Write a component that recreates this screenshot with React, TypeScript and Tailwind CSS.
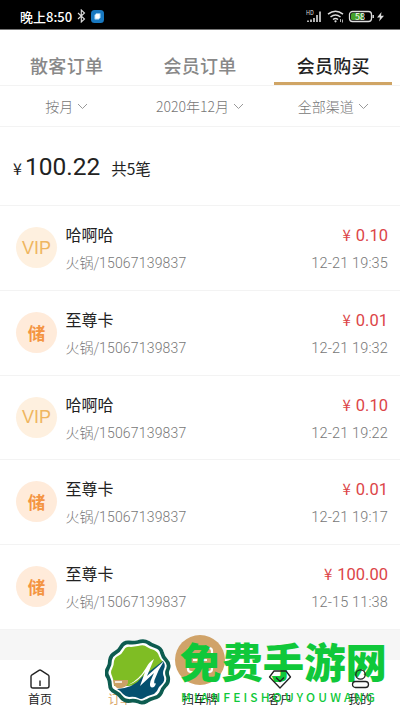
import React from "react";
import clsx from "clsx";

type Order = {
    kind: 'vip' | 'stored',
    name: string,
    detail: string,
    amount: string,
    time: string,
}

const orders: Order[] = [
    { kind: 'vip', name: '哈啊哈', detail: '15067139837', amount: '0.10', time: '12-21 19:35' },
    { kind: 'stored', name: '至尊卡', detail: '15067139837', amount: '0.01', time: '12-21 19:32' },
    { kind: 'vip', name: '哈啊哈', detail: '15067139837', amount: '0.10', time: '12-21 19:22' },
    { kind: 'stored', name: '至尊卡', detail: '15067139837', amount: '0.01', time: '12-21 19:17' },
    { kind: 'stored', name: '至尊卡', detail: '15067139837', amount: '100.00', time: '12-15 11:38' },
];

const tabs = ['散客订单', '会员订单', '会员购买'];
const filters = ['按月', '2020年12月', '全部渠道'];

const StatusBar = () => (
    <header className="flex h-[30px] items-center border-b border-[#777] bg-black pl-[20px] pr-[15px] pt-[3px] text-white">
        <span className="w-[52px] whitespace-nowrap text-[13px] font-medium leading-none">晚上8:50</span>
        <svg className="ml-[5px]" width="9" height="14" viewBox="0 0 9 14" fill="none" stroke="#ddd" strokeWidth="1.1">
            <path d="M1 4l6.5 6L4.3 13V1l3.2 3L1 10" />
        </svg>
        <svg className="ml-[5px]" width="13" height="13" viewBox="0 0 13 13">
            <rect width="13" height="13" rx="3.5" fill="#1878c0" />
            <path d="M5.2 3.6h4v3.9L7.8 9.2h-4V5.1z" fill="#fff" stroke="#7fc2f0" strokeWidth="0.8" />
        </svg>
        <div className="flex-grow"></div>
        <svg width="79" height="15" viewBox="0 0 79 15" fill="none">
            <text x="0" y="5.500" fontSize="5.500" fill="#ddd">HD</text>
            <path d="M2 13v-1.400M5 13v-2.600M8 13V9M11 13V6M14 13V2.500" stroke="#ddd" strokeWidth="1.600" />
            <g stroke="#ddd" strokeWidth="1.500">
                <path d="M22 5.200q7.500-6 15 0M24.500 8q5-4 10 0M27 10.500q2.500-2 5 0" />
                <path d="M34.500 10v3M36.500 10.500v3" strokeWidth="0.8" />
            </g>
            <circle cx="29.500" cy="12.300" r="1.100" fill="#ddd" />
            <rect x="43.500" y="2.500" width="22" height="10" rx="3" stroke="#ddd" strokeWidth="1.300" />
            <rect x="45" y="4" width="12" height="7" rx="1.500" fill="#45a02c" />
            <path d="M67.200 6v3" stroke="#ddd" strokeWidth="1.500" />
            <text x="49" y="10.800" fontSize="9" fill="#fff">58</text>
            <path d="M75.500 3l-4.500 5.500h3l-1 4 5-5.800h-3z" fill="#ddd" />
        </svg>
    </header>
)

const Chevron = () => (
    <svg width="11" height="7" viewBox="0 0 11 7" fill="none" stroke="#999">
        <path d="M1 1l4.500 4.500L10 1" />
    </svg>
)

const OrderRow = ({ order }: { order: Order }) => (
    <li className="flex h-[84.8px] border-b border-[#f3f3f3] pl-[16px] pr-[12px] pt-[21px]">
        {order.kind == 'vip' ?
            <div className="flex h-[41px] w-[41px] items-center justify-center rounded-full bg-[#fef0df] pt-px font-['Liberation_Sans',sans-serif] text-[18px] text-[#efb65f]">VIP</div>
            :
            <div className="flex h-[41px] w-[41px] items-center justify-center rounded-full bg-[#ffebda] pt-px text-[17.500px] font-bold text-[#f49542]">储</div>}
        <div className="ml-[8.500px] flex-grow">
            <h2 className="-mt-[4px] text-[16px] leading-[22px] text-[#222]">{order.name}</h2>
            <p className="mt-[7px] flex text-[14px] font-light leading-[20px] text-[#777]">
                火锅/<span className="pt-px font-['Roboto',sans-serif] tracking-[0.180px]">{order.detail}</span>
            </p>
        </div>
        <div className="text-right">
            <p className="-mt-[4px] text-[16.500px] leading-[22px] text-[#dc4548]">
                <span className="mr-[5px] text-[15px]">¥</span>
                <span className="font-['Roboto',sans-serif]">{order.amount}</span>
            </p>
            <p className="mt-[7px] font-['Roboto',sans-serif] text-[14.500px] font-light leading-[20px] tracking-[0.150px] text-[#777]">{order.time}</p>
        </div>
    </li>
)

type NavItemProps = {
    label: string,
    active?: boolean,
    children?: React.ReactNode,
}

const NavItem = ({ label, active, children }: NavItemProps) => (
    <div className={clsx("flex w-1/5 flex-col items-center pt-[8px] text-[12px]", active ? "text-[#d9a566]" : "text-[#222]")}>
        <div className={clsx("h-[22px]", !active && "relative z-10")}>{children}</div>
        <span className="leading-[18px]">{label}</span>
    </div>
)

const BottomNav = () => (
    <nav className="relative flex h-[51px] bg-white">
        <NavItem label="首页">
            <svg width="22" height="22" viewBox="0 0 22 22" fill="none" stroke="#222" strokeWidth="1.400" strokeLinejoin="round">
                <path d="M2 8.500Q2 7.500 3 6.800L10 2.300Q11 1.700 12 2.300L19 6.800Q20 7.500 20 8.500V18Q20 20 18 20H4Q2 20 2 18zM11 12.500v5.500" />
            </svg>
        </NavItem>
        <NavItem label="订单" active>
            <svg width="26" height="22" viewBox="0 0 26 22">
                <rect x="3" y="1" width="20" height="19" rx="3" fill="#d0a36b" />
            </svg>
        </NavItem>
        <NavItem label="扫车牌" />
        <NavItem label="客户">
            <svg width="24" height="22" viewBox="0 0 24 22" fill="none" stroke="#222" strokeWidth="1.300" strokeLinejoin="round">
                <path d="M6 3h12l4.500 6L12 20 1.500 9zM8 9.500l4 4 4-4" />
            </svg>
        </NavItem>
        <NavItem label="我的">
            <svg width="20" height="22" viewBox="0 0 20 22" fill="none" stroke="#222" strokeWidth="1.300">
                <circle cx="10.500" cy="6.500" r="4.700" />
                <rect x="2.500" y="13.500" width="16" height="6" rx="3" />
            </svg>
        </NavItem>
        <div className="absolute -top-[25px] left-[175px] flex h-[50px] w-[50px] items-center justify-center rounded-full bg-[#d0a369]">
            <svg width="28" height="28" viewBox="0 0 28 28" fill="none" stroke="#fff" strokeWidth="2.200">
                <path d="M2 9V5Q2 2 5 2h5M18 2h5q3 0 3 3v4M2 19v4q0 3 3 3h5M18 26h5q3 0 3-3v-4M7 14h14" />
            </svg>
        </div>
    </nav>
)

// site badge and name laid over the bottom bar
const Watermark = () => (
    <div className="pointer-events-none absolute left-[105px] top-[639px] flex">
        <svg width="67" height="66" viewBox="0 0 67 66">
            <path
                d="M33 3Q39 1 43 3.500Q46 6 51 7.500Q56 9 57 14Q58 18 61 21Q65 25 63 30Q61 34 63 38Q64 44 60 47Q57 50 56 54Q54 58 49 59Q45 60 42 62Q37 65 33 62.500Q29 61 24 62Q19 62 16 58Q14 55 10 53Q5 51 5 46Q5 42 3 38Q0 34 3 29Q5 26 5 21Q6 16 10 14Q14 12 16 8Q19 3 24 3.500Q29 4 33 3z"
                fill="#fff" stroke="#0d5c50" strokeWidth="3.800"
            />
            <path d="M33 7Q39 5 42 8Q45 10 49 11Q53 13 54 17Q55 20 58 23L38 38Q32 47 23 47L9 47Q9 41 7 37Q5 33 7 30Q9 26 9 22Q10 18 13 17Q17 15 19 11Q21 7 26 8z" fill="#7fbd24" />
            <path d="M8 41H23V44Q21 50 12 49L9 46z" fill="#cba066" />
            <path d="M10 43h7" stroke="#fff" strokeWidth="1.500" />
            <path d="M12 50Q29 49 37 38L58 22Q61 26 59 30Q57 34 59 38Q60 42 57 45Q53 48 52 52Q50 55 46 56Q42 57 39 59Q36 61 33 59Q29 57 24 58Q21 58 18 55Q16 52 12 50z" fill="#05506f" />
            <path d="M23 46Q34 41 41 29Q44 23 49 20L42 37L59 22Q53 31 49.500 41Q48.500 46 51 44Q50 48.500 47 48.500Q44 48 45.500 42L49 34L35 47L40 33Q33 43 23 46z" fill="#fff" />
        </svg>
        <div className="ml-[8px] whitespace-nowrap text-[#10c83a]">
            <p className="-mt-[3px] h-[52px] text-[41.400px] font-black leading-[49px]">免费手游网</p>
            <p className="ml-[1px] text-[12px] font-medium leading-[18px] tracking-[3.100px]">MIANFEISHOUYOUWANG</p>
        </div>
    </div>
)

const App = function () {
    return (
        <main className="relative h-[711px] w-[400px] overflow-hidden bg-white font-['Noto_Sans_CJK_SC',sans-serif]">
            <StatusBar />
            <div className="flex h-[56px] border-b border-[#f3f3f3]">
                {tabs.map((tab, i) => (
                    <div key={tab} className="flex w-1/3 justify-center px-[7.500px]">
                        <span className={clsx(
                            "flex w-full justify-center border-b-[3px] pt-[21px] text-[18px] font-medium leading-[28px] tracking-[0.300px]",
                            i == 2 ? "border-[#d0a565] text-[#222]" : "border-transparent text-[#888]",
                        )}>{tab}</span>
                    </div>
                ))}
            </div>
            <div className="flex h-[41px] border-b border-[#f3f3f3]">
                {filters.map((filter) => (
                    <div key={filter} className="flex w-1/3 items-center justify-center gap-[4px] pt-px text-[14px] font-light text-[#777]">
                        {filter}
                        <Chevron />
                    </div>
                ))}
            </div>
            <section className="flex h-[79px] items-baseline border-b border-[#f3f3f3] pl-[13px] pt-[20px] text-[#222]">
                <span className="text-[16px]">¥</span>
                <span className="ml-[3px] font-['Roboto',sans-serif] text-[24.500px] leading-[40px]">100.22</span>
                <span className="ml-[11px] text-[15.500px]">共5笔</span>
            </section>
            <ul>
                {orders.map((order, i) => <OrderRow key={i} order={order} />)}
            </ul>
            <div className="h-[30px] bg-[#f6f6f6]"></div>
            <BottomNav />
            <Watermark />
        </main>
    )
}

export default App;
